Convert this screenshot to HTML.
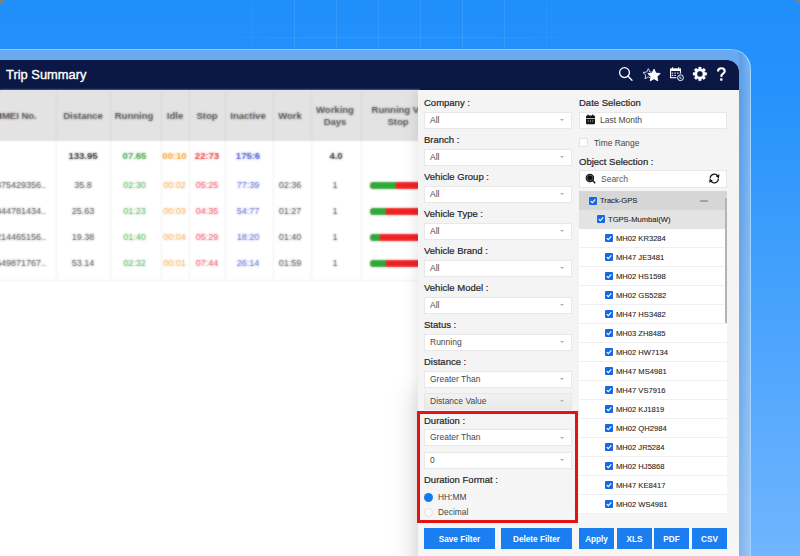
<!DOCTYPE html><html><head><meta charset="utf-8"><style>
*{box-sizing:border-box;margin:0;padding:0}
html,body{width:800px;height:556px;overflow:hidden}
body{position:relative;background:linear-gradient(180deg,#1f8ffa 0px,#2592fb 90px,#70b5fe 556px);font-family:"Liberation Sans",sans-serif;}
.a{position:absolute;white-space:nowrap}
.lbl{position:absolute;font-size:9.5px;line-height:9px;color:#262626;-webkit-text-stroke:0.2px #262626;white-space:nowrap}
.sel{position:absolute;height:17px;background:#fff;border:1px solid #e8e8e8;font-size:8.5px;color:#474747;padding-left:5px;line-height:15px;white-space:nowrap}
.car{position:absolute;right:7px;top:6.3px;width:0;height:0;border-left:2.5px solid transparent;border-right:2.5px solid transparent;border-top:2px solid #b0b0b0}
.btn{position:absolute;top:528px;height:21px;background:#1a7ef0;color:#fff;font-size:8.2px;font-weight:bold;text-align:center;line-height:23px}
.cb{position:absolute;width:8px;height:8px;background:#1668e3;border-radius:1px}
.cb svg{position:absolute;left:0;top:0}
.trow{position:absolute;left:579px;width:148px;height:19px;background:#fff;border-bottom:1px solid #f0f0f0;box-shadow:0 1px 0 #f7f7f7}
.tt{position:absolute;font-size:7.6px;line-height:8px;color:#262626;-webkit-text-stroke:0.1px #262626;white-space:nowrap}
.th{position:absolute;font-size:9.5px;line-height:12px;color:#4a4a4a;font-weight:bold;text-align:center;white-space:nowrap}
.td{position:absolute;font-size:9px;line-height:10px;text-align:center;white-space:nowrap;color:#444}
.sep{position:absolute;top:90px;width:1px;background:#ececec}
</style></head><body>
<div class="a" style="left:252px;top:0;width:1px;height:49px;background:rgba(255,255,255,0.04)"></div>
<div class="a" style="left:294px;top:0;width:1px;height:49px;background:rgba(255,255,255,0.09)"></div>
<div class="a" style="left:336px;top:0;width:1px;height:49px;background:rgba(255,255,255,0.09)"></div>
<div class="a" style="left:378px;top:0;width:1px;height:49px;background:rgba(255,255,255,0.09)"></div>
<div class="a" style="left:420px;top:0;width:1px;height:49px;background:rgba(255,255,255,0.09)"></div>
<div class="a" style="left:462px;top:0;width:1px;height:49px;background:rgba(255,255,255,0.09)"></div>
<div class="a" style="left:504px;top:0;width:1px;height:49px;background:rgba(255,255,255,0.09)"></div>
<div class="a" style="left:546px;top:0;width:1px;height:49px;background:rgba(255,255,255,0.04)"></div>
<div class="a" style="left:200px;top:37px;width:400px;height:1px;background:linear-gradient(90deg,rgba(255,255,255,0),rgba(255,255,255,.08) 30%,rgba(255,255,255,.08) 70%,rgba(255,255,255,0))"></div>
<div class="a" style="left:0;top:0;width:6px;height:6px;background:radial-gradient(circle at 6px 6px,rgba(0,0,0,0) 5px,#857d7a 6.5px)"></div>
<div class="a" style="left:794px;top:0;width:6px;height:6px;background:radial-gradient(circle at 0 6px,rgba(0,0,0,0) 5px,#7f7f80 6.5px)"></div>
<div class="a" style="left:-40px;top:49px;width:791px;height:507px;background:linear-gradient(180deg,rgba(255,255,255,0) 0,rgba(255,255,255,0) 40px,rgba(255,255,255,.25) 507px),linear-gradient(90deg,#68aaf0 0,#68aaf0 778px,#5c9fe6 780px,#76b4f6 790px);border-top-right-radius:20px;border-top:1px solid #92c8fa;border-right:1px solid #a6d4fc"></div>
<div class="a" style="left:-20px;top:60px;width:759px;height:600px;background:#fff;border-top-right-radius:12px;overflow:hidden">
<div class="a" style="left:0;top:0;width:759px;height:30px;background:#0b1845"></div>
</div>
<div class="a" style="left:6px;top:67px;color:#fff;font-size:12.9px;line-height:16px;-webkit-text-stroke:0.35px #fff">Trip Summary</div>

<svg class="a" style="left:614px;top:63px" width="120" height="22" viewBox="614 63 120 22">
 <g fill="none" stroke="#fff" stroke-width="1.3" stroke-linecap="round">
  <circle cx="624.5" cy="72.6" r="4.9"/>
  <line x1="628.1" y1="76.2" x2="632" y2="80.3"/>
 </g>
 <path d="M648.30 68.60 L649.89 72.02 L653.63 72.47 L650.87 75.03 L651.59 78.73 L648.30 76.90 L645.01 78.73 L645.73 75.03 L642.97 72.47 L646.71 72.02 Z" fill="none" stroke="#fff" stroke-width="0.8" stroke-linejoin="round"/>
 <path d="M654.00 69.00 L655.88 73.01 L660.28 73.56 L657.04 76.59 L657.88 80.94 L654.00 78.80 L650.12 80.94 L650.96 76.59 L647.72 73.56 L652.12 73.01 Z" fill="#fff" stroke="#0b1845" stroke-width="1" stroke-linejoin="round" paint-order="stroke"/>
 <path d="M654.00 69.00 L655.88 73.01 L660.28 73.56 L657.04 76.59 L657.88 80.94 L654.00 78.80 L650.12 80.94 L650.96 76.59 L647.72 73.56 L652.12 73.01 Z" fill="#fff" stroke="#fff" stroke-width="0.6" stroke-linejoin="round"/>
 <rect x="670.6" y="68.9" width="9.8" height="8.8" fill="none" stroke="#fff" stroke-width="1.1"/>
 <rect x="670.6" y="68.9" width="9.8" height="2.1" fill="#fff"/>
 <rect x="672.1" y="67.2" width="1" height="2" fill="#fff"/><rect x="678.1" y="67.2" width="1" height="2" fill="#fff"/>
 <g fill="#fff" opacity=".9">
  <rect x="671.8" y="72.6" width="1.5" height="1.1"/><rect x="674.4" y="72.6" width="1.5" height="1.1"/><rect x="677" y="72.6" width="1.5" height="1.1"/>
  <rect x="671.8" y="74.9" width="1.5" height="1.1"/><rect x="674.4" y="74.9" width="1.5" height="1.1"/>
 </g>
 <circle cx="680.5" cy="77.7" r="4.1" fill="#0b1845"/>
 <circle cx="680.5" cy="77.7" r="2.9" fill="none" stroke="#fff" stroke-width="1"/>
 <path d="M679.9 76.2 V78.2 H681.6" fill="none" stroke="#fff" stroke-width="0.8"/>
 <path fill="#fff" fill-rule="evenodd" stroke="#fff" stroke-width="0.3" stroke-linejoin="round" d="M705.02 72.53 L706.77 72.56 L706.77 75.24 L705.02 75.27 L704.49 76.55 L705.70 77.81 L703.81 79.70 L702.55 78.49 L701.27 79.02 L701.24 80.77 L698.56 80.77 L698.53 79.02 L697.25 78.49 L695.99 79.70 L694.10 77.81 L695.31 76.55 L694.78 75.27 L693.03 75.24 L693.03 72.56 L694.78 72.53 L695.31 71.25 L694.10 69.99 L695.99 68.10 L697.25 69.31 L698.53 68.78 L698.56 67.03 L701.24 67.03 L701.27 68.78 L702.55 69.31 L703.81 68.10 L705.70 69.99 L704.49 71.25 Z M702.80 73.90 A2.9 2.9 0 1 0 697.00 73.90 A2.9 2.9 0 1 0 702.80 73.90 Z"/>
 <path d="M718 71.4 C718 69.2 719.5 68.3 721.3 68.3 C723.3 68.3 724.7 69.5 724.7 71.2 C724.7 73.3 722 73.6 721.4 75.6 L721.3 76.9" fill="none" stroke="#fff" stroke-width="2.1" stroke-linecap="butt"/>
 <rect x="720.1" y="78.3" width="2.4" height="2.4" rx="0.6" fill="#fff"/>
</svg>

<div class="a" style="left:0;top:90px;width:420px;height:200px;background:#fff">
<div class="a" style="left:0;top:0;width:420px;height:51px;background:#e4e3e4"></div>
<div class="a" style="left:56px;top:0;width:1px;height:190px;background:rgba(0,0,0,.045)"></div>
<div class="a" style="left:110px;top:0;width:1px;height:190px;background:rgba(0,0,0,.045)"></div>
<div class="a" style="left:161px;top:0;width:1px;height:190px;background:rgba(0,0,0,.045)"></div>
<div class="a" style="left:189px;top:0;width:1px;height:190px;background:rgba(0,0,0,.045)"></div>
<div class="a" style="left:225px;top:0;width:1px;height:190px;background:rgba(0,0,0,.045)"></div>
<div class="a" style="left:273px;top:0;width:1px;height:190px;background:rgba(0,0,0,.045)"></div>
<div class="a" style="left:311px;top:0;width:1px;height:190px;background:rgba(0,0,0,.045)"></div>
<div class="a" style="left:361px;top:0;width:1px;height:190px;background:rgba(0,0,0,.045)"></div>
<div class="th" style="left:-42px;top:20px;width:120px">IMEI No.</div>
<div class="th" style="left:23px;top:20px;width:120px">Distance</div>
<div class="th" style="left:74px;top:20px;width:120px">Running</div>
<div class="th" style="left:115px;top:20px;width:120px">Idle</div>
<div class="th" style="left:147px;top:20px;width:120px">Stop</div>
<div class="th" style="left:188px;top:20px;width:120px">Inactive</div>
<div class="th" style="left:230px;top:20px;width:120px">Work</div>
<div class="th" style="left:275px;top:14px;width:120px">Working<br>Days</div>
<div class="th" style="left:338px;top:14px;width:120px">Running Vs<br>Stop</div>
<div class="td" style="left:43px;top:61px;width:80px;color:#222;font-weight:bold;font-size:9.5px">133.95</div>
<div class="td" style="left:94.5px;top:61px;width:80px;color:#2f9e36;font-weight:bold;font-size:9.5px">07.65</div>
<div class="td" style="left:134.5px;top:61px;width:80px;color:#f59a22;font-weight:bold;font-size:9.5px">00:10</div>
<div class="td" style="left:167px;top:61px;width:80px;color:#e8222f;font-weight:bold;font-size:9.5px">22:73</div>
<div class="td" style="left:208px;top:61px;width:80px;color:#3546cf;font-weight:bold;font-size:9.5px">175:6</div>
<div class="td" style="left:296px;top:61px;width:80px;color:#222;font-weight:bold;font-size:9.5px">4.0</div>
<div class="td" style="left:-34px;top:90px;width:80px;text-align:right;color:#3a3a3a">3875429356..</div>
<div class="td" style="left:43px;top:90px;width:80px;color:#3a3a3a">35.8</div>
<div class="td" style="left:94.5px;top:90px;width:80px;color:#3aaa3e">02:30</div>
<div class="td" style="left:134.5px;top:90px;width:80px;color:#f4a640">00:02</div>
<div class="td" style="left:167px;top:90px;width:80px;color:#ea3a46">05:25</div>
<div class="td" style="left:208px;top:90px;width:80px;color:#4653d6">77:39</div>
<div class="td" style="left:250px;top:90px;width:80px;color:#3a3a3a">02:36</div>
<div class="td" style="left:295px;top:90px;width:80px;color:#3a3a3a">1</div>
<div class="a" style="left:370px;top:91.5px;width:60px;height:7px;background:#ee2222;border-radius:3.5px 0 0 3.5px"></div>
<div class="a" style="left:370px;top:91.5px;width:26px;height:7px;background:#2ea836;border-radius:3.5px 0 0 3.5px"></div>
<div class="td" style="left:-34px;top:116px;width:80px;text-align:right;color:#3a3a3a">844781434..</div>
<div class="td" style="left:43px;top:116px;width:80px;color:#3a3a3a">25.63</div>
<div class="td" style="left:94.5px;top:116px;width:80px;color:#3aaa3e">01:23</div>
<div class="td" style="left:134.5px;top:116px;width:80px;color:#f4a640">00:03</div>
<div class="td" style="left:167px;top:116px;width:80px;color:#ea3a46">04:35</div>
<div class="td" style="left:208px;top:116px;width:80px;color:#4653d6">54:77</div>
<div class="td" style="left:250px;top:116px;width:80px;color:#3a3a3a">01:27</div>
<div class="td" style="left:295px;top:116px;width:80px;color:#3a3a3a">1</div>
<div class="a" style="left:370px;top:117.5px;width:60px;height:7px;background:#ee2222;border-radius:3.5px 0 0 3.5px"></div>
<div class="a" style="left:370px;top:117.5px;width:16px;height:7px;background:#2ea836;border-radius:3.5px 0 0 3.5px"></div>
<div class="td" style="left:-34px;top:142px;width:80px;text-align:right;color:#3a3a3a">2214465156..</div>
<div class="td" style="left:43px;top:142px;width:80px;color:#3a3a3a">19.38</div>
<div class="td" style="left:94.5px;top:142px;width:80px;color:#3aaa3e">01:40</div>
<div class="td" style="left:134.5px;top:142px;width:80px;color:#f4a640">00:04</div>
<div class="td" style="left:167px;top:142px;width:80px;color:#ea3a46">05:29</div>
<div class="td" style="left:208px;top:142px;width:80px;color:#4653d6">18:20</div>
<div class="td" style="left:250px;top:142px;width:80px;color:#3a3a3a">01:40</div>
<div class="td" style="left:295px;top:142px;width:80px;color:#3a3a3a">1</div>
<div class="a" style="left:370px;top:143.5px;width:60px;height:7px;background:#ee2222;border-radius:3.5px 0 0 3.5px"></div>
<div class="a" style="left:370px;top:143.5px;width:9.5px;height:7px;background:#2ea836;border-radius:3.5px 0 0 3.5px"></div>
<div class="td" style="left:-34px;top:168px;width:80px;text-align:right;color:#3a3a3a">6549871767..</div>
<div class="td" style="left:43px;top:168px;width:80px;color:#3a3a3a">53.14</div>
<div class="td" style="left:94.5px;top:168px;width:80px;color:#3aaa3e">02:32</div>
<div class="td" style="left:134.5px;top:168px;width:80px;color:#f4a640">00:01</div>
<div class="td" style="left:167px;top:168px;width:80px;color:#ea3a46">07:44</div>
<div class="td" style="left:208px;top:168px;width:80px;color:#4653d6">26:14</div>
<div class="td" style="left:250px;top:168px;width:80px;color:#3a3a3a">01:59</div>
<div class="td" style="left:295px;top:168px;width:80px;color:#3a3a3a">1</div>
<div class="a" style="left:370px;top:169.5px;width:60px;height:7px;background:#ee2222;border-radius:3.5px 0 0 3.5px"></div>
<div class="a" style="left:370px;top:169.5px;width:15.5px;height:7px;background:#2ea836;border-radius:3.5px 0 0 3.5px"></div>
<div class="a" style="left:0;top:190px;width:420px;height:1px;background:rgba(0,0,0,.05)"></div>
</div>
<div class="a" style="left:0;top:90px;width:420px;height:200px;background:#fff;filter:blur(0.8px);opacity:.7">
<div class="a" style="left:0;top:0;width:420px;height:51px;background:#e4e3e4"></div>
<div class="a" style="left:56px;top:0;width:1px;height:190px;background:rgba(0,0,0,.045)"></div>
<div class="a" style="left:110px;top:0;width:1px;height:190px;background:rgba(0,0,0,.045)"></div>
<div class="a" style="left:161px;top:0;width:1px;height:190px;background:rgba(0,0,0,.045)"></div>
<div class="a" style="left:189px;top:0;width:1px;height:190px;background:rgba(0,0,0,.045)"></div>
<div class="a" style="left:225px;top:0;width:1px;height:190px;background:rgba(0,0,0,.045)"></div>
<div class="a" style="left:273px;top:0;width:1px;height:190px;background:rgba(0,0,0,.045)"></div>
<div class="a" style="left:311px;top:0;width:1px;height:190px;background:rgba(0,0,0,.045)"></div>
<div class="a" style="left:361px;top:0;width:1px;height:190px;background:rgba(0,0,0,.045)"></div>
<div class="th" style="left:-42px;top:20px;width:120px">IMEI No.</div>
<div class="th" style="left:23px;top:20px;width:120px">Distance</div>
<div class="th" style="left:74px;top:20px;width:120px">Running</div>
<div class="th" style="left:115px;top:20px;width:120px">Idle</div>
<div class="th" style="left:147px;top:20px;width:120px">Stop</div>
<div class="th" style="left:188px;top:20px;width:120px">Inactive</div>
<div class="th" style="left:230px;top:20px;width:120px">Work</div>
<div class="th" style="left:275px;top:14px;width:120px">Working<br>Days</div>
<div class="th" style="left:338px;top:14px;width:120px">Running Vs<br>Stop</div>
<div class="td" style="left:43px;top:61px;width:80px;color:#222;font-weight:bold;font-size:9.5px">133.95</div>
<div class="td" style="left:94.5px;top:61px;width:80px;color:#2f9e36;font-weight:bold;font-size:9.5px">07.65</div>
<div class="td" style="left:134.5px;top:61px;width:80px;color:#f59a22;font-weight:bold;font-size:9.5px">00:10</div>
<div class="td" style="left:167px;top:61px;width:80px;color:#e8222f;font-weight:bold;font-size:9.5px">22:73</div>
<div class="td" style="left:208px;top:61px;width:80px;color:#3546cf;font-weight:bold;font-size:9.5px">175:6</div>
<div class="td" style="left:296px;top:61px;width:80px;color:#222;font-weight:bold;font-size:9.5px">4.0</div>
<div class="td" style="left:-34px;top:90px;width:80px;text-align:right;color:#3a3a3a">3875429356..</div>
<div class="td" style="left:43px;top:90px;width:80px;color:#3a3a3a">35.8</div>
<div class="td" style="left:94.5px;top:90px;width:80px;color:#3aaa3e">02:30</div>
<div class="td" style="left:134.5px;top:90px;width:80px;color:#f4a640">00:02</div>
<div class="td" style="left:167px;top:90px;width:80px;color:#ea3a46">05:25</div>
<div class="td" style="left:208px;top:90px;width:80px;color:#4653d6">77:39</div>
<div class="td" style="left:250px;top:90px;width:80px;color:#3a3a3a">02:36</div>
<div class="td" style="left:295px;top:90px;width:80px;color:#3a3a3a">1</div>
<div class="a" style="left:370px;top:91.5px;width:60px;height:7px;background:#ee2222;border-radius:3.5px 0 0 3.5px"></div>
<div class="a" style="left:370px;top:91.5px;width:26px;height:7px;background:#2ea836;border-radius:3.5px 0 0 3.5px"></div>
<div class="td" style="left:-34px;top:116px;width:80px;text-align:right;color:#3a3a3a">844781434..</div>
<div class="td" style="left:43px;top:116px;width:80px;color:#3a3a3a">25.63</div>
<div class="td" style="left:94.5px;top:116px;width:80px;color:#3aaa3e">01:23</div>
<div class="td" style="left:134.5px;top:116px;width:80px;color:#f4a640">00:03</div>
<div class="td" style="left:167px;top:116px;width:80px;color:#ea3a46">04:35</div>
<div class="td" style="left:208px;top:116px;width:80px;color:#4653d6">54:77</div>
<div class="td" style="left:250px;top:116px;width:80px;color:#3a3a3a">01:27</div>
<div class="td" style="left:295px;top:116px;width:80px;color:#3a3a3a">1</div>
<div class="a" style="left:370px;top:117.5px;width:60px;height:7px;background:#ee2222;border-radius:3.5px 0 0 3.5px"></div>
<div class="a" style="left:370px;top:117.5px;width:16px;height:7px;background:#2ea836;border-radius:3.5px 0 0 3.5px"></div>
<div class="td" style="left:-34px;top:142px;width:80px;text-align:right;color:#3a3a3a">2214465156..</div>
<div class="td" style="left:43px;top:142px;width:80px;color:#3a3a3a">19.38</div>
<div class="td" style="left:94.5px;top:142px;width:80px;color:#3aaa3e">01:40</div>
<div class="td" style="left:134.5px;top:142px;width:80px;color:#f4a640">00:04</div>
<div class="td" style="left:167px;top:142px;width:80px;color:#ea3a46">05:29</div>
<div class="td" style="left:208px;top:142px;width:80px;color:#4653d6">18:20</div>
<div class="td" style="left:250px;top:142px;width:80px;color:#3a3a3a">01:40</div>
<div class="td" style="left:295px;top:142px;width:80px;color:#3a3a3a">1</div>
<div class="a" style="left:370px;top:143.5px;width:60px;height:7px;background:#ee2222;border-radius:3.5px 0 0 3.5px"></div>
<div class="a" style="left:370px;top:143.5px;width:9.5px;height:7px;background:#2ea836;border-radius:3.5px 0 0 3.5px"></div>
<div class="td" style="left:-34px;top:168px;width:80px;text-align:right;color:#3a3a3a">6549871767..</div>
<div class="td" style="left:43px;top:168px;width:80px;color:#3a3a3a">53.14</div>
<div class="td" style="left:94.5px;top:168px;width:80px;color:#3aaa3e">02:32</div>
<div class="td" style="left:134.5px;top:168px;width:80px;color:#f4a640">00:01</div>
<div class="td" style="left:167px;top:168px;width:80px;color:#ea3a46">07:44</div>
<div class="td" style="left:208px;top:168px;width:80px;color:#4653d6">26:14</div>
<div class="td" style="left:250px;top:168px;width:80px;color:#3a3a3a">01:59</div>
<div class="td" style="left:295px;top:168px;width:80px;color:#3a3a3a">1</div>
<div class="a" style="left:370px;top:169.5px;width:60px;height:7px;background:#ee2222;border-radius:3.5px 0 0 3.5px"></div>
<div class="a" style="left:370px;top:169.5px;width:15.5px;height:7px;background:#2ea836;border-radius:3.5px 0 0 3.5px"></div>
<div class="a" style="left:0;top:190px;width:420px;height:1px;background:rgba(0,0,0,.05)"></div>
</div>
<div class="a" style="left:418px;top:380px;width:20px;height:220px;box-shadow:-8px 10px 24px rgba(0,0,0,.10)"></div>
<div class="a" style="left:418px;top:90px;width:321px;height:470px;background:linear-gradient(#f4f4f4,#f4f4f4 300px,#f7f6f6);box-shadow:-4px 0 10px rgba(0,0,0,.08)"></div>
<div class="lbl" style="left:424px;top:98px">Company :</div>
<div class="lbl" style="left:424px;top:135px">Branch :</div>
<div class="lbl" style="left:424px;top:172px">Vehicle Group :</div>
<div class="lbl" style="left:424px;top:209px">Vehicle Type :</div>
<div class="lbl" style="left:424px;top:246px">Vehicle Brand :</div>
<div class="lbl" style="left:424px;top:283px">Vehicle Model :</div>
<div class="lbl" style="left:424px;top:320px">Status :</div>
<div class="lbl" style="left:424px;top:357px">Distance :</div>
<div class="lbl" style="left:424px;top:415.5px">Duration :</div>
<div class="lbl" style="left:424px;top:475px">Duration Format :</div>
<div class="sel" style="left:424px;top:111.6px;width:148px;">All<div class="car"></div></div>
<div class="sel" style="left:424px;top:148.6px;width:148px;">All<div class="car"></div></div>
<div class="sel" style="left:424px;top:185.6px;width:148px;">All<div class="car"></div></div>
<div class="sel" style="left:424px;top:222.6px;width:148px;">All<div class="car"></div></div>
<div class="sel" style="left:424px;top:259.6px;width:148px;">All<div class="car"></div></div>
<div class="sel" style="left:424px;top:296.6px;width:148px;">All<div class="car"></div></div>
<div class="sel" style="left:424px;top:333.5px;width:148px;">Running<div class="car"></div></div>
<div class="sel" style="left:424px;top:371px;width:148px;">Greater Than<div class="car"></div></div>
<div class="sel" style="left:424px;top:392.5px;width:148px;background:linear-gradient(#f2f2f2,#e9e9e9);border-color:#e6e6e6;">Distance Value<div class="car"></div></div>
<div class="sel" style="left:424px;top:429.3px;width:148px;">Greater Than<div class="car"></div></div>
<div class="sel" style="left:424px;top:451.8px;width:148px;">0<div class="car"></div></div>
<div class="a" style="left:424px;top:493px;width:9px;height:9px;border-radius:50%;background:#107cf0"></div>
<div class="a" style="left:424px;top:508px;width:9px;height:9px;border-radius:50%;background:#fafafa;border:1px solid #e0e0e0"></div>
<div class="a" style="left:438px;top:493px;font-size:8.4px;line-height:9px;color:#444">HH:MM</div>
<div class="a" style="left:438px;top:508px;font-size:8.4px;line-height:9px;color:#444">Decimal</div>
<div class="a" style="left:416.5px;top:411px;width:161.5px;height:111.5px;border:3px solid #e41212"></div>
<div class="lbl" style="left:579px;top:98px">Date Selection</div>
<div class="sel" style="left:579px;top:112px;width:148px;padding-left:20px">Last Month</div>
<svg class="a" style="left:585px;top:114px" width="11" height="11" viewBox="0 0 11 11">
<rect x="1" y="1.6" width="9" height="8.6" rx="1.2" fill="#111"/>
<rect x="2.6" y="0.6" width="1.2" height="2" fill="#111"/><rect x="7.2" y="0.6" width="1.2" height="2" fill="#111"/>
<rect x="1" y="4" width="9" height="0.7" fill="#fff"/>
<rect x="2.7" y="5.8" width="1" height="2.6" fill="#777"/><rect x="5" y="5.8" width="1" height="2.6" fill="#777"/><rect x="7.3" y="5.8" width="1" height="2.6" fill="#777"/>
</svg>
<div class="a" style="left:579px;top:138px;width:9px;height:9px;background:#fff;border:1px solid #e2e2e2"></div>
<div class="a" style="left:594px;top:138.5px;font-size:8.4px;line-height:9px;color:#444">Time Range</div>
<div class="lbl" style="left:579px;top:157px">Object Selection :</div>
<div class="sel" style="left:579px;top:170px;width:148px;height:18px;padding-left:21px;line-height:16px;color:#555">Search</div>
<svg class="a" style="left:584px;top:172px" width="13" height="13" viewBox="0 0 13 13">
<circle cx="5.9" cy="5.9" r="3.7" fill="#111" stroke="#111" stroke-width="1.1"/>
<circle cx="5.9" cy="5.9" r="2.9" fill="none" stroke="#777" stroke-width="0.7"/>
<line x1="8.6" y1="8.6" x2="10.8" y2="10.8" stroke="#111" stroke-width="1.4" stroke-linecap="round"/>
</svg>
<svg class="a" style="left:706px;top:170px" width="16" height="16" viewBox="706 170 16 16">
<path d="M710.2 178.2 A4.2 4.2 0 0 1 717.6 175.6" fill="none" stroke="#111" stroke-width="1.2"/>
<path d="M715.6 175.9 L719.4 174.3 L718.9 178.6 Z" fill="#111"/>
<path d="M718.4 178.8 A4.2 4.2 0 0 1 711 181.4" fill="none" stroke="#111" stroke-width="1.2"/>
<path d="M713 181.1 L709.2 182.7 L709.7 178.4 Z" fill="#111"/>
</svg>
<div class="a" style="left:579px;top:191px;width:148px;height:19px;background:#d6d6d6"></div>
<div class="a" style="left:579px;top:210px;width:148px;height:19px;background:#e3e3e3"></div>
<div class="cb" style="left:589px;top:197px"><svg width="8" height="8" viewBox="0 0 8 8"><path d="M1.7 4.1 L3.3 5.6 L6.3 2.4" fill="none" stroke="#fff" stroke-width="1.1"/></svg></div>
<div class="tt" style="left:600px;top:197px">Track-GPS</div>
<div class="a" style="left:700px;top:200px;width:8px;height:2px;background:#a3a3a3"></div>
<div class="cb" style="left:597px;top:215px"><svg width="8" height="8" viewBox="0 0 8 8"><path d="M1.7 4.1 L3.3 5.6 L6.3 2.4" fill="none" stroke="#fff" stroke-width="1.1"/></svg></div>
<div class="tt" style="left:608px;top:216px">TGPS-Mumbai(W)</div>
<div class="trow" style="top:229px"></div>
<div class="cb" style="left:605px;top:234px"><svg width="8" height="8" viewBox="0 0 8 8"><path d="M1.7 4.1 L3.3 5.6 L6.3 2.4" fill="none" stroke="#fff" stroke-width="1.1"/></svg></div>
<div class="tt" style="left:616px;top:235px">MH02 KR3284</div>
<div class="trow" style="top:248px"></div>
<div class="cb" style="left:605px;top:253px"><svg width="8" height="8" viewBox="0 0 8 8"><path d="M1.7 4.1 L3.3 5.6 L6.3 2.4" fill="none" stroke="#fff" stroke-width="1.1"/></svg></div>
<div class="tt" style="left:616px;top:254px">MH47 JE3481</div>
<div class="trow" style="top:267px"></div>
<div class="cb" style="left:605px;top:272px"><svg width="8" height="8" viewBox="0 0 8 8"><path d="M1.7 4.1 L3.3 5.6 L6.3 2.4" fill="none" stroke="#fff" stroke-width="1.1"/></svg></div>
<div class="tt" style="left:616px;top:273px">MH02 HS1598</div>
<div class="trow" style="top:286px"></div>
<div class="cb" style="left:605px;top:291px"><svg width="8" height="8" viewBox="0 0 8 8"><path d="M1.7 4.1 L3.3 5.6 L6.3 2.4" fill="none" stroke="#fff" stroke-width="1.1"/></svg></div>
<div class="tt" style="left:616px;top:292px">MH02 GS5282</div>
<div class="trow" style="top:305px"></div>
<div class="cb" style="left:605px;top:310px"><svg width="8" height="8" viewBox="0 0 8 8"><path d="M1.7 4.1 L3.3 5.6 L6.3 2.4" fill="none" stroke="#fff" stroke-width="1.1"/></svg></div>
<div class="tt" style="left:616px;top:311px">MH47 HS3482</div>
<div class="trow" style="top:324px"></div>
<div class="cb" style="left:605px;top:329px"><svg width="8" height="8" viewBox="0 0 8 8"><path d="M1.7 4.1 L3.3 5.6 L6.3 2.4" fill="none" stroke="#fff" stroke-width="1.1"/></svg></div>
<div class="tt" style="left:616px;top:330px">MH03 ZH8485</div>
<div class="trow" style="top:343px"></div>
<div class="cb" style="left:605px;top:348px"><svg width="8" height="8" viewBox="0 0 8 8"><path d="M1.7 4.1 L3.3 5.6 L6.3 2.4" fill="none" stroke="#fff" stroke-width="1.1"/></svg></div>
<div class="tt" style="left:616px;top:349px">MH02 HW7134</div>
<div class="trow" style="top:362px"></div>
<div class="cb" style="left:605px;top:367px"><svg width="8" height="8" viewBox="0 0 8 8"><path d="M1.7 4.1 L3.3 5.6 L6.3 2.4" fill="none" stroke="#fff" stroke-width="1.1"/></svg></div>
<div class="tt" style="left:616px;top:368px">MH47 MS4981</div>
<div class="trow" style="top:381px"></div>
<div class="cb" style="left:605px;top:386px"><svg width="8" height="8" viewBox="0 0 8 8"><path d="M1.7 4.1 L3.3 5.6 L6.3 2.4" fill="none" stroke="#fff" stroke-width="1.1"/></svg></div>
<div class="tt" style="left:616px;top:387px">MH47 VS7916</div>
<div class="trow" style="top:400px"></div>
<div class="cb" style="left:605px;top:405px"><svg width="8" height="8" viewBox="0 0 8 8"><path d="M1.7 4.1 L3.3 5.6 L6.3 2.4" fill="none" stroke="#fff" stroke-width="1.1"/></svg></div>
<div class="tt" style="left:616px;top:406px">MH02 KJ1819</div>
<div class="trow" style="top:419px"></div>
<div class="cb" style="left:605px;top:424px"><svg width="8" height="8" viewBox="0 0 8 8"><path d="M1.7 4.1 L3.3 5.6 L6.3 2.4" fill="none" stroke="#fff" stroke-width="1.1"/></svg></div>
<div class="tt" style="left:616px;top:425px">MH02 QH2984</div>
<div class="trow" style="top:438px"></div>
<div class="cb" style="left:605px;top:443px"><svg width="8" height="8" viewBox="0 0 8 8"><path d="M1.7 4.1 L3.3 5.6 L6.3 2.4" fill="none" stroke="#fff" stroke-width="1.1"/></svg></div>
<div class="tt" style="left:616px;top:444px">MH02 JR5284</div>
<div class="trow" style="top:457px"></div>
<div class="cb" style="left:605px;top:462px"><svg width="8" height="8" viewBox="0 0 8 8"><path d="M1.7 4.1 L3.3 5.6 L6.3 2.4" fill="none" stroke="#fff" stroke-width="1.1"/></svg></div>
<div class="tt" style="left:616px;top:463px">MH02 HJ5868</div>
<div class="trow" style="top:476px"></div>
<div class="cb" style="left:605px;top:481px"><svg width="8" height="8" viewBox="0 0 8 8"><path d="M1.7 4.1 L3.3 5.6 L6.3 2.4" fill="none" stroke="#fff" stroke-width="1.1"/></svg></div>
<div class="tt" style="left:616px;top:482px">MH47 KE8417</div>
<div class="trow" style="top:495px"></div>
<div class="cb" style="left:605px;top:500px"><svg width="8" height="8" viewBox="0 0 8 8"><path d="M1.7 4.1 L3.3 5.6 L6.3 2.4" fill="none" stroke="#fff" stroke-width="1.1"/></svg></div>
<div class="tt" style="left:616px;top:501px">MH02 WS4981</div>
<div class="a" style="left:725px;top:198px;width:2px;height:125px;background:#b4b4b4"></div>
<div class="btn" style="left:424px;width:71px">Save Filter</div>
<div class="btn" style="left:501px;width:71px">Delete Filter</div>
<div class="btn" style="left:579px;width:35px">Apply</div>
<div class="btn" style="left:617px;width:35px">XLS</div>
<div class="btn" style="left:654px;width:35px">PDF</div>
<div class="btn" style="left:692px;width:35px">CSV</div>
</body></html>
